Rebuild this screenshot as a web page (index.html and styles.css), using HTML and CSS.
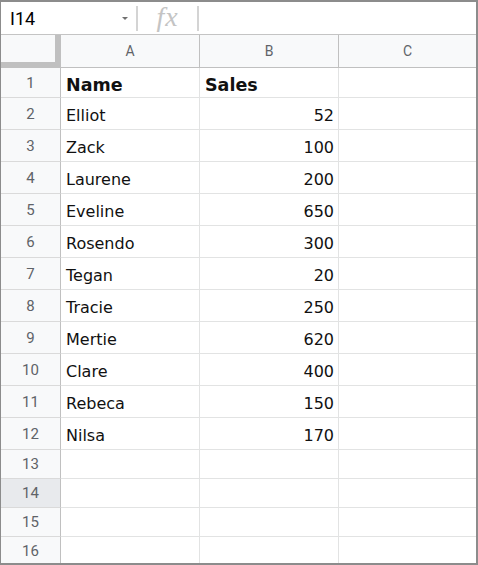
FILE: index.html
```html
<!DOCTYPE html>
<html>
<head>
<meta charset="utf-8">
<link rel="stylesheet" href="styles.css">
</head>
<body>
<div class="frame">
  <div class="formula-bar">
    <div class="namebox"><span class="ref">I14</span><span class="caret"></span></div>
    <div class="sep"></div>
    <div class="fx">fx</div>
    <div class="sep"></div>
    <div class="formula-input"></div>
  </div>
  <div class="sheet">
    <div class="corner"></div>
    <div class="colhead">A</div>
    <div class="colhead">B</div>
    <div class="colhead last">C</div>

    <div class="rowhead">1</div><div class="cell bold">Name</div><div class="cell bold">Sales</div><div class="cell last"></div>
    <div class="rowhead">2</div><div class="cell">Elliot</div><div class="cell num">52</div><div class="cell last"></div>
    <div class="rowhead">3</div><div class="cell">Zack</div><div class="cell num">100</div><div class="cell last"></div>
    <div class="rowhead">4</div><div class="cell">Laurene</div><div class="cell num">200</div><div class="cell last"></div>
    <div class="rowhead">5</div><div class="cell">Eveline</div><div class="cell num">650</div><div class="cell last"></div>
    <div class="rowhead">6</div><div class="cell">Rosendo</div><div class="cell num">300</div><div class="cell last"></div>
    <div class="rowhead">7</div><div class="cell">Tegan</div><div class="cell num">20</div><div class="cell last"></div>
    <div class="rowhead">8</div><div class="cell">Tracie</div><div class="cell num">250</div><div class="cell last"></div>
    <div class="rowhead">9</div><div class="cell">Mertie</div><div class="cell num">620</div><div class="cell last"></div>
    <div class="rowhead">10</div><div class="cell">Clare</div><div class="cell num">400</div><div class="cell last"></div>
    <div class="rowhead">11</div><div class="cell">Rebeca</div><div class="cell num">150</div><div class="cell last"></div>
    <div class="rowhead">12</div><div class="cell">Nilsa</div><div class="cell num">170</div><div class="cell last"></div>
    <div class="rowhead">13</div><div class="cell"></div><div class="cell"></div><div class="cell last"></div>
    <div class="rowhead selected">14</div><div class="cell"></div><div class="cell"></div><div class="cell last"></div>
    <div class="rowhead">15</div><div class="cell"></div><div class="cell"></div><div class="cell last"></div>
    <div class="rowhead">16</div><div class="cell"></div><div class="cell"></div><div class="cell last"></div>
  </div>
</div>
</body>
</html>
```

FILE: styles.css
```css
* { box-sizing: border-box; }
html, body { margin: 0; padding: 0; background: #fff; }

.frame {
  width: 478px;
  height: 565px;
  border: 2px solid #8c8c8c;
  border-left-width: 1px;
  overflow: hidden;
  display: flex;
  flex-direction: column;
  background: #fff;
}

.formula-bar {
  height: 33px;
  flex: none;
  display: flex;
  align-items: center;
  border-bottom: 1px solid #c4c4c4;
}

.namebox {
  width: 135px;
  display: flex;
  align-items: center;
  justify-content: space-between;
  padding: 0 8px 0 9px;
  font-family: Roboto, "Liberation Sans", sans-serif;
  font-size: 18px;
  color: #000;
}

.caret {
  width: 0;
  height: 0;
  border-left: 3.5px solid transparent;
  border-right: 3.5px solid transparent;
  border-top: 3.5px solid #707070;
  margin-top: 1px;
}

.sep {
  width: 2px;
  height: 25px;
  background: #d4d4d4;
  flex: none;
}

.fx {
  width: 59px;
  text-align: center;
  font-family: "Liberation Serif", serif;
  font-style: italic;
  font-size: 28px;
  letter-spacing: 1px;
  color: #c4c4c4;
  line-height: 1;
  padding-bottom: 3px;
}

.formula-input { flex: 1; }

.sheet {
  flex: none;
  display: grid;
  grid-template-columns: 60px 139px 139px 137px;
  grid-template-rows: 33px 30px repeat(11, 32px) repeat(4, 29px);
}

.corner {
  background: #f8f9fa;
  border-right: 6px solid #c0c0c0;
  border-bottom: 6px solid #c0c0c0;
}

.colhead {
  background: #f8f9fa;
  border-right: 1px solid #c0c0c0;
  border-bottom: 1px solid #c0c0c0;
  display: flex;
  align-items: center;
  justify-content: center;
  font-family: Roboto, "Liberation Sans", sans-serif;
  font-size: 14px;
  color: #5f6368;
}

.colhead.last { border-right: none; }

.rowhead {
  background: #f8f9fa;
  border-right: 1px solid #c0c0c0;
  border-bottom: 1px solid #dadada;
  display: flex;
  align-items: center;
  justify-content: center;
  font-family: Roboto, "Liberation Sans", sans-serif;
  font-size: 15px;
  color: #5f6368;
}

.rowhead.selected { background: #e8eaed; }

.cell {
  border-right: 1px solid #e2e3e3;
  border-bottom: 1px solid #e2e3e3;
  display: flex;
  align-items: flex-end;
  padding: 0 4px 4px 5px;
  font-family: "DejaVu Sans", Verdana, sans-serif;
  font-size: 16px;
  line-height: 19px;
  color: #111;
  white-space: nowrap;
}

.cell.last { border-right: none; }

.cell.num { justify-content: flex-end; }

.cell.bold {
  font-weight: bold;
  font-size: 17.5px;
  padding-bottom: 2px;
}
```
